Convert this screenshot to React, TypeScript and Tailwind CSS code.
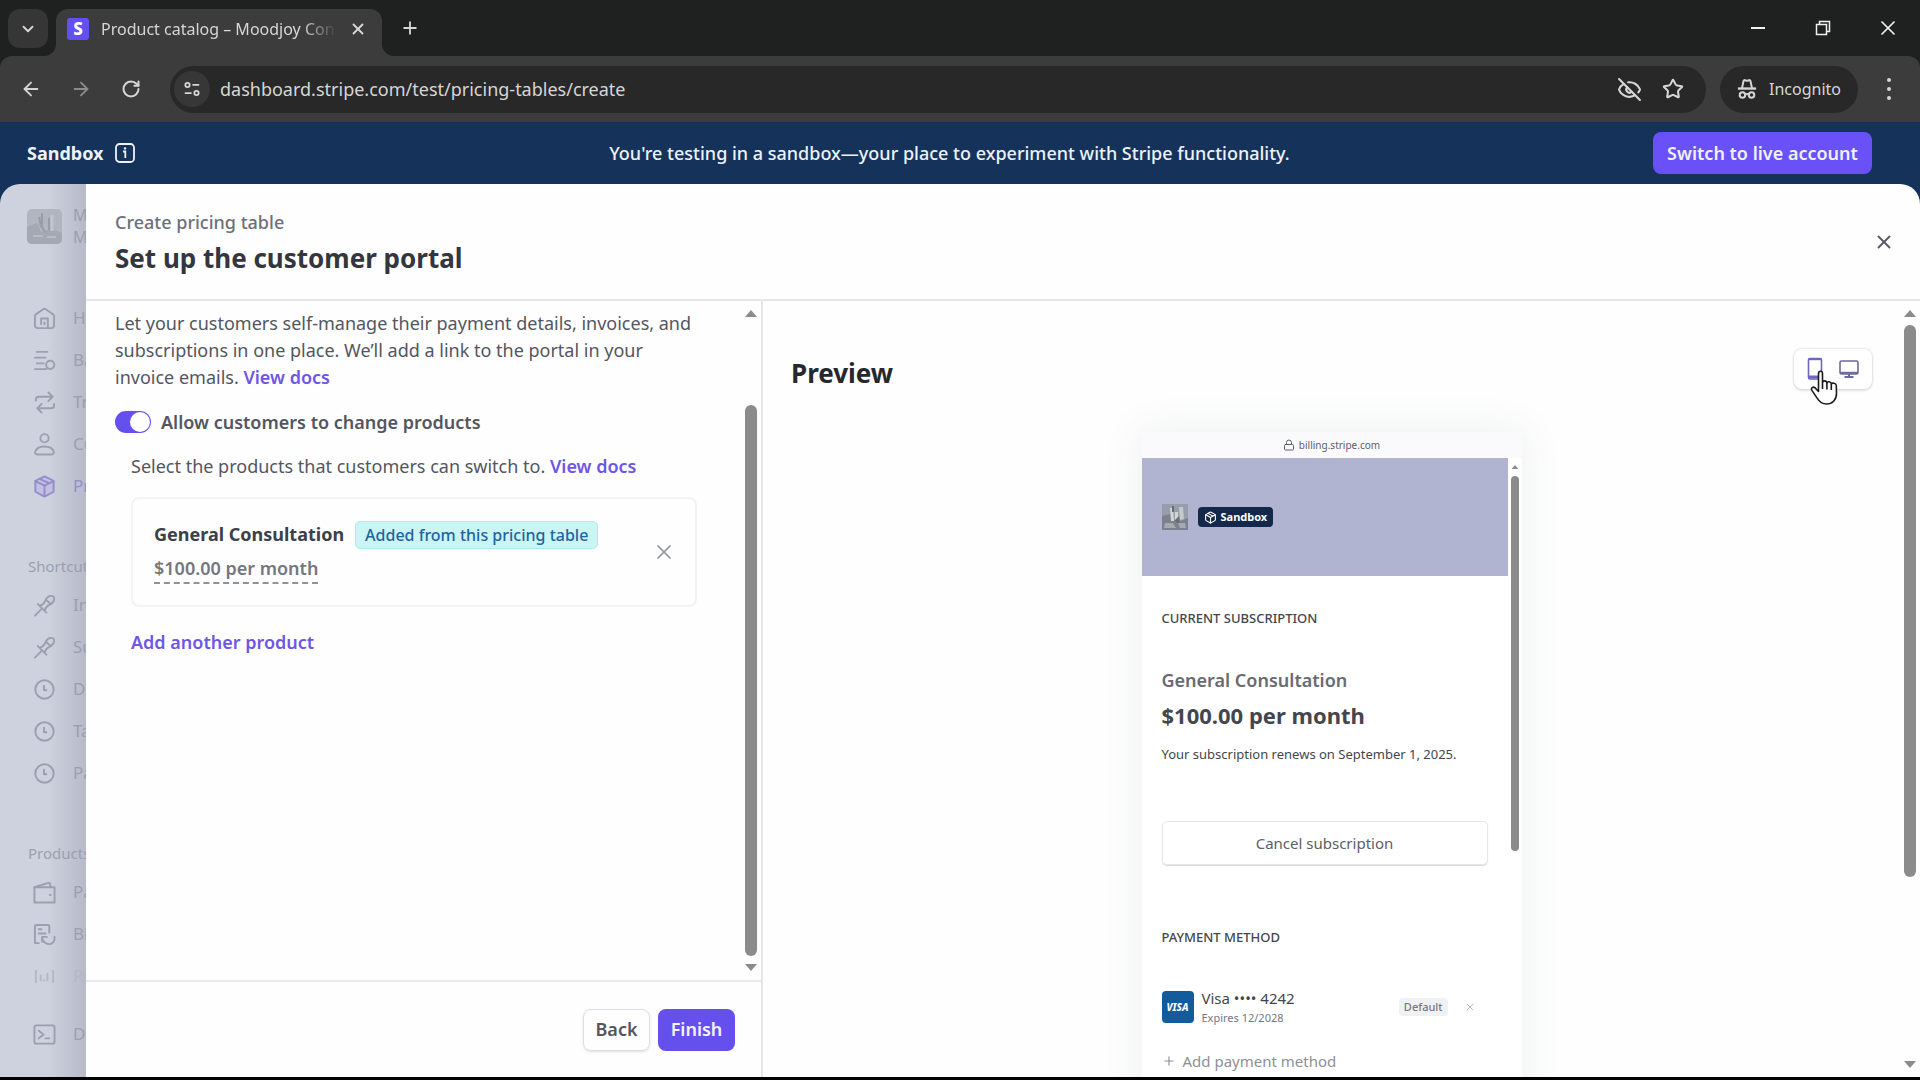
import React from "react";
import {
  ArrowLeft,
  ArrowRight,
  ChevronDown,
  EyeOff,
  Lock,
  Package,
  Plus,
  RotateCw,
  Star,
  X,
} from "lucide-react";

type IconProps = { className?: string };

function TuneIcon({ className }: IconProps) {
  return (
    <svg className={className} viewBox="0 0 20 20" fill="none" stroke="currentColor" strokeWidth="2">
      <circle cx="5" cy="5.5" r="2.4" />
      <path d="M10.5 5.5H18M2 14.5h7.5" />
      <circle cx="15" cy="14.5" r="2.4" />
    </svg>
  );
}

function IncognitoIcon({ className }: IconProps) {
  return (
    <svg className={className} viewBox="0 0 22 24" fill="none" stroke="currentColor" strokeWidth="2.2">
      <path d="M5.5 11 7.2 3.2c.2-.8.8-1.1 1.5-.9l1.2.4c.7.3 1.5.3 2.2 0l1.2-.4c.7-.2 1.3.1 1.5.9L16.5 11" />
      <path d="M1 11.5h20" strokeWidth="2.6" />
      <circle cx="6" cy="18.5" r="3" />
      <circle cx="16" cy="18.5" r="3" />
      <path d="M9 18c1.2-.7 2.8-.7 4 0" />
    </svg>
  );
}

function RestoreIcon({ className }: IconProps) {
  return (
    <svg className={className} viewBox="0 0 16 16" fill="none" stroke="currentColor" strokeWidth="1.5">
      <path d="M1.5 4.5h10v10h-10zM4.5 4.5v-3h10v10h-3" />
    </svg>
  );
}

function InfoIcon({ className }: IconProps) {
  return (
    <svg className={className} viewBox="0 0 20 20" fill="none" stroke="currentColor" strokeWidth="1.8">
      <rect x="1" y="1" width="18" height="18" rx="3.5" />
      <path d="M8 8.5h2.3V15" />
      <circle cx="10" cy="5.4" r="1.2" fill="currentColor" stroke="none" />
    </svg>
  );
}

function NavSvg({ className, children }: { className?: string; children: React.ReactNode }) {
  return (
    <svg
      className={className}
      viewBox="0 0 24 24"
      fill="none"
      stroke="currentColor"
      strokeWidth="2"
      strokeLinecap="round"
      strokeLinejoin="round"
    >
      {children}
    </svg>
  );
}

function HomeIcon({ className }: IconProps) {
  return (
    <NavSvg className={className}>
      <path d="M2 9.8c0-1 .5-1.900 1.300-2.400L10.700 2.300c.8-.5 1.800-.5 2.600 0l7.400 5.100c.8.5 1.300 1.400 1.300 2.400V19c0 1.700-1.300 3-3 3H5c-1.700 0-3-1.300-3-3z" />
      <path d="M8.500 18v-6h7v10M12 18v-2" />
    </NavSvg>
  );
}

function BalancesIcon({ className }: IconProps) {
  return (
    <NavSvg className={className}>
      <path d="M4 3h11M2 9h11M4 15h7M2 21h12" />
      <circle cx="18" cy="16.500" r="4.300" />
    </NavSvg>
  );
}

function TransactionsIcon({ className }: IconProps) {
  return (
    <NavSvg className={className}>
      <path d="M3 10V9c0-1.700 1.300-3 3-3h14M16 1.500 20.500 6 16 10.500" />
      <path d="M22 13.500v1.500c0 1.700-1.300 3-3 3H5M9 13.500 4.500 18 9 22.500" />
    </NavSvg>
  );
}

function CustomersIcon({ className }: IconProps) {
  return (
    <NavSvg className={className}>
      <circle cx="12" cy="5.500" r="4.300" />
      <path d="M5 22.500c-1.700 0-3-1.100-2.700-2.700C3 16.500 6.600 14 12 14s9 2.500 9.700 5.800c.3 1.600-1 2.700-2.700 2.700z" />
    </NavSvg>
  );
}

function ProductIcon({ className }: IconProps) {
  return (
    <NavSvg className={className}>
      <path d="M12 1.500 21.500 6v11.500L12 22.500 2.500 17.500V6z" fill="#c3c0e2" />
      <path d="M2.500 6.500 12 11l9.500-4.500M12 11v11M7 4l9.500 4.500" />
    </NavSvg>
  );
}

function PinIcon({ className }: IconProps) {
  return (
    <NavSvg className={className}>
      <path d="M2 22.500 9 15.500" />
      <path d="M5 10.500 14 19.500M6.500 12c3 0 5.500-3 7-6.500C15 2.800 18 1.500 20.500 2.200c.8.200 1.200.6 1.300 1.300.7 2.500-.8 5.500-3.300 7-3.500 1.700-6.500 4-6 7.500" />
      <path d="M13.500 6 18.500 10.500" />
    </NavSvg>
  );
}

function ClockIcon({ className }: IconProps) {
  return (
    <NavSvg className={className}>
      <circle cx="12" cy="12" r="9.600" />
      <path d="M11.500 8v4.800h2.500" />
    </NavSvg>
  );
}

function WalletIcon({ className }: IconProps) {
  return (
    <NavSvg className={className}>
      <path d="M1.500 6.500h21v16h-21z" />
      <path d="M1.500 6.500 16 2c1-.3 2 .2 2 1.200v3.300" />
      <path d="M17.500 14.500h1" />
    </NavSvg>
  );
}

function BillingIcon({ className }: IconProps) {
  return (
    <NavSvg className={className}>
      <path d="M6 21H2V3.500C2 2.500 2.700 2 3.500 2h12c.8 0 1.500.5 1.500 1.500V10" />
      <path d="M6 6.500h3M6 11h7M9.500 14.500v5M9.500 14.500h5" />
      <path d="M9.500 16c1 4 4 6 7.500 6 3.500 0 6-3 5.500-7.500" />
    </NavSvg>
  );
}

function ReportingIcon({ className }: IconProps) {
  return (
    <NavSvg className={className}>
      <path d="M3 6v12M21 6v12M8 11v5M15 9v7M11 16h1" />
    </NavSvg>
  );
}

function TerminalIcon({ className }: IconProps) {
  return (
    <NavSvg className={className}>
      <rect x="1.500" y="2.500" width="21" height="19" rx="2" />
      <path d="M6 8l5 4-5 4M13 16h4" />
    </NavSvg>
  );
}

function PhoneIcon({ className }: IconProps) {
  return (
    <svg className={className} viewBox="0 0 16 24" fill="none" stroke="currentColor" strokeWidth="1.6">
      <rect x="1.5" y="1.5" width="13" height="20.5" rx="1.5" />
      <path d="M1.5 20h13" strokeWidth="3" />
      <path d="M1.5 2.2h13" strokeWidth="2" />
    </svg>
  );
}

function MonitorIcon({ className }: IconProps) {
  return (
    <svg className={className} viewBox="0 0 20 20" fill="none" stroke="currentColor" strokeWidth="1.6">
      <rect x="1" y="2" width="18" height="13" rx="1.5" />
      <path d="M1 13.8h18" strokeWidth="2" />
      <path d="M5.5 18h9M10 15v3" strokeWidth="2" />
    </svg>
  );
}

function HandCursor({ className }: IconProps) {
  return (
    <svg className={className} viewBox="0 0 28 36" fill="#fff" stroke="#1c1c1c" strokeWidth="1.6" strokeLinejoin="round">
      <path d="M8.500 21.500V3.500c0-3 4-3 4 0v9c.5-2.400 4.200-2.200 4.400.5.700-2 4.200-1.700 4.400.9.900-1.300 4.700-1.100 5 1.600l.2 8c0 6-3.800 10.500-10 10.500-4.600 0-7-2-9.200-5.600l-5.400-8c-1.400-2.300 1.200-4.200 3.200-2.500z" />
      <path d="M12.500 12.500v6.500M16.900 13v6.500M21.300 14v6" fill="none" />
    </svg>
  );
}

function Thumbnail({ className }: IconProps) {
  return (
    <svg className={className} viewBox="0 0 26 26" preserveAspectRatio="none">
      <rect width="26" height="26" fill="#989dab" />
      <path d="M0 12 8 10l2 6 6 2 10-4v12H0z" fill="#7d818d" />
      <path d="M8 4h3l1 13H9zM13 8h3v10h-3z" fill="#d3d5d5" />
      <path d="M17 3h4l1 12-4 1z" fill="#c4cac9" />
      <path d="M10 2h2v6h-2zM12 17l5-5 1 8z" fill="#666b75" />
      <path d="M3 19h8l3 5H2zM16 19h7l1 5h-6z" fill="#a5aab2" />
    </svg>
  );
}

function FadedThumbnail({ className }: IconProps) {
  return (
    <svg className={className} viewBox="0 0 35 35">
      <rect width="35" height="35" rx="5" fill="#b0b5c0" />
      <path d="M0 18 10 14l4 9 10-3 11 4v6a5 5 0 0 1-5 5H5a5 5 0 0 1-5-5z" fill="#a3a8b3" />
      <path d="M15 4v14l3 5M22 9v12M12 8l2 10" stroke="#989da9" strokeWidth="2" fill="none" />
      <path d="M25 6v16" stroke="#c0c5ce" strokeWidth="3" />
      <path d="M6 27h10M20 28h9" stroke="#b7bcc6" strokeWidth="2" />
    </svg>
  );
}

function Arrow({ down = false, small = false }: { down?: boolean; small?: boolean }) {
  return (
    <svg className={small ? "w-2 h-1 text-[#8b8b8b]" : "w-3 h-[7px] text-[#8b8b8b]"} viewBox="0 0 12 7" fill="currentColor">
      <path d={down ? "M0 0h12L6 7z" : "M0 7h12L6 0z"} />
    </svg>
  );
}

function BrowserChrome() {
  return (
    <header className="shrink-0 bg-[#1f2020] text-[#d6d6d6]">
      <div className="flex h-14 items-end">
        <button aria-label="Search tabs" className="mb-2 ml-2 flex h-[39px] w-10 items-center justify-center rounded-xl bg-[#363636]">
          <ChevronDown className="size-[18px]" strokeWidth={2.5} />
        </button>
        <div className="relative ml-2 flex h-[47px] w-[326px] items-center rounded-t-xl bg-[#3c3c3c] pb-2 pl-[11px] pr-3 before:absolute before:bottom-0 before:-left-3 before:size-3 before:rounded-br-xl before:shadow-[4px_4px_0_4px_#3c3c3c] after:absolute after:bottom-0 after:-right-3 after:size-3 after:rounded-bl-xl after:shadow-[-4px_4px_0_4px_#3c3c3c]">
          <span className="flex size-[22px] shrink-0 items-center justify-center rounded-[3px] bg-[#6350f2] text-[17px] font-extrabold leading-none text-white">
            S
          </span>
          <span className="ml-3 w-[236px] overflow-hidden whitespace-nowrap text-base mask-r-from-85% mask-r-to-100%">
            Product catalog – Moodjoy Con
          </span>
          <button aria-label="Close tab" className="ml-auto flex size-6 items-center justify-center">
            <X className="size-[18px]" strokeWidth={2.5} />
          </button>
        </div>
        <button aria-label="New tab" className="mb-4 ml-4 flex size-6 items-center justify-center">
          <Plus className="size-5" strokeWidth={2.2} />
        </button>
        <div className="mb-4 ml-auto mr-5 flex gap-[41px] text-[#f0f0f0]">
          <button aria-label="Minimize" className="flex size-6 items-center justify-center">
            <span className="h-[2px] w-[14px] bg-current" />
          </button>
          <button aria-label="Restore" className="flex size-6 items-center justify-center">
            <RestoreIcon className="size-4" />
          </button>
          <button aria-label="Close window" className="flex size-6 items-center justify-center">
            <X className="size-6" strokeWidth={1.7} />
          </button>
        </div>
      </div>
      <div className="flex h-[66px] items-center rounded-t-xl bg-[#3c3c3c] pl-4">
        <button aria-label="Back" className="flex w-[30px] justify-center">
          <ArrowLeft className="size-[22px]" />
        </button>
        <button aria-label="Forward" className="ml-5 flex w-[30px] justify-center text-[#8b8b8b]">
          <ArrowRight className="size-[22px]" />
        </button>
        <button aria-label="Reload" className="ml-5 flex w-[30px] justify-center">
          <RotateCw className="size-5" strokeWidth={2.4} />
        </button>
        <div className="ml-6 flex h-[47px] flex-1 items-center rounded-full bg-[#282828] pl-1 pr-[22px]">
          <button aria-label="View site information" className="flex size-9 items-center justify-center rounded-full bg-[#373737]">
            <TuneIcon className="size-[18px]" />
          </button>
          <input
            aria-label="Address"
            className="ml-[10px] min-w-0 flex-1 bg-transparent text-[18px] leading-7 outline-none"
            defaultValue="dashboard.stripe.com/test/pricing-tables/create"
          />
          <button aria-label="Third-party cookies blocked" className="mr-5">
            <EyeOff className="size-[25px]" />
          </button>
          <button aria-label="Bookmark">
            <Star className="size-[22px]" strokeWidth={2.2} />
          </button>
        </div>
        <button className="ml-[14px] flex h-[47px] w-[138px] items-center justify-center gap-3 rounded-full bg-[#282828] text-base">
          <IncognitoIcon className="h-6 w-5" />
          Incognito
        </button>
        <button aria-label="Menu" className="ml-[18px] mr-[18px] flex w-[26px] flex-col items-center gap-[5px]">
          <span className="size-1 rounded-full bg-current" />
          <span className="size-1 rounded-full bg-current" />
          <span className="size-1 rounded-full bg-current" />
        </button>
      </div>
    </header>
  );
}

function SandboxBanner() {
  return (
    <div className="flex h-[62px] shrink-0 items-center bg-[#15335a] pl-[27px] pr-12 text-[18px] text-[#eef2f8]">
      <div className="flex flex-1 items-center gap-3 font-bold">
        Sandbox
        <InfoIcon className="size-5" />
      </div>
      <p className="font-medium">You're testing in a sandbox—your place to experiment with Stripe functionality.</p>
      <div className="flex flex-1 justify-end">
        <button className="h-[42px] w-[219px] rounded-lg bg-[#6a50f7] font-semibold">Switch to live account</button>
      </div>
    </div>
  );
}

function NavItem({ icon: Icon, label, active = false, faded = false }: {
  icon: React.ComponentType<IconProps>;
  label: string;
  active?: boolean;
  faded?: boolean;
}) {
  return (
    <a
      href="#"
      className={`flex h-[42px] shrink-0 items-center gap-[17px] whitespace-nowrap pl-[33px] ${active ? "text-[#938dcb]" : faded ? "text-[#b4b8c5]" : "text-[#9b9fae]"}`}
    >
      <Icon className="size-[23px] shrink-0" />
      <span className="min-w-0 flex-1 overflow-hidden">{label}</span>
    </a>
  );
}

function Sidebar() {
  return (
    <nav className="flex w-[86px] shrink-0 flex-col overflow-hidden rounded-tl-[20px] bg-linear-to-r from-[#ced2de] from-55% to-[#b7bac8] text-[17px] text-[#9b9fae]">
      <div className="mt-[22px] flex h-10 shrink-0 items-center gap-[11px] whitespace-nowrap pl-[27px]">
        <FadedThumbnail className="size-[35px] shrink-0" />
        <div className="min-w-0 flex-1 overflow-hidden text-base leading-[22px]">
          <div>Moodjoy</div>
          <div>Moodjoy</div>
        </div>
      </div>
      <div className="mt-[51px] flex shrink-0 flex-col">
        <NavItem icon={HomeIcon} label="Home" />
        <NavItem icon={BalancesIcon} label="Balances" />
        <NavItem icon={TransactionsIcon} label="Transactions" />
        <NavItem icon={CustomersIcon} label="Customers" />
        <NavItem icon={ProductIcon} label="Product catalog" active />
      </div>
      <h3 className="mt-[47px] overflow-hidden pl-7 text-[15px] leading-6">Shortcuts</h3>
      <div className="mt-[6px] flex shrink-0 flex-col">
        <NavItem icon={PinIcon} label="Invoices" />
        <NavItem icon={PinIcon} label="Subscriptions" />
        <NavItem icon={ClockIcon} label="Disputes" />
        <NavItem icon={ClockIcon} label="Tax" />
        <NavItem icon={ClockIcon} label="Payment Links" />
      </div>
      <h3 className="mt-[47px] overflow-hidden pl-7 text-[15px] leading-6">Products</h3>
      <div className="mt-[6px] flex shrink-0 flex-col">
        <NavItem icon={WalletIcon} label="Payments" />
        <NavItem icon={BillingIcon} label="Billing" />
        <NavItem icon={ReportingIcon} label="Reporting" faded />
      </div>
      <div className="mb-[22px] mt-auto">
        <NavItem icon={TerminalIcon} label="Developers" />
      </div>
    </nav>
  );
}

function SettingsPanel() {
  return (
    <section className="flex w-[677px] shrink-0 flex-col border-r-2 border-[#e4e6ea] text-[18px] text-[#53565e]">
      <div className="flex min-h-0 flex-1">
        <div className="min-w-0 flex-1 overflow-hidden pl-[29px] pr-11 pt-[9px]">
          <p className="leading-[27px]">
            Let your customers self-manage their payment details, invoices, and subscriptions in one place. We’ll add a
            link to the portal in your invoice emails.{" "}
            <a href="#" className="font-semibold text-[#6f56e6]">View docs</a>
          </p>
          <label className="mt-[17px] flex h-7 items-center gap-[10px] font-semibold">
            <input
              type="checkbox"
              defaultChecked
              className="relative h-[22px] w-9 appearance-none rounded-full bg-[#6550ee] before:absolute before:right-px before:top-px before:size-5 before:rounded-full before:bg-white"
            />
            Allow customers to change products
          </label>
          <div className="ml-4 mt-[17px]">
            <p className="leading-[27px]">
              Select the products that customers can switch to.{" "}
              <a href="#" className="font-semibold text-[#6f56e6]">View docs</a>
            </p>
            <div className="mt-[17px] flex h-[110px] items-center rounded-lg border-2 border-[#f2f3f5] pl-[21px] pr-[19px]">
              <div className="flex-1">
                <div className="flex items-center gap-[11px]">
                  <h3 className="font-bold text-[#3d4048]">General Consultation</h3>
                  <span className="flex h-7 items-center whitespace-nowrap rounded-[5px] border border-[#a9ebee] bg-[#cbf5f5] px-[9px] text-base font-medium text-[#1f63a0]">
                    Added from this pricing table
                  </span>
                </div>
                <span className="mt-[6px] inline-block border-b-2 border-dashed border-[#8c919b] font-semibold leading-[27px] text-[#73777f]">
                  $100.00 per month
                </span>
              </div>
              <button aria-label="Remove product" className="text-[#8f939b]">
                <X className="size-6" strokeWidth={1.7} />
              </button>
            </div>
            <button className="mt-[22px] font-semibold leading-[27px] text-[#6f56e6]">Add another product</button>
          </div>
        </div>
        <div className="flex w-5 flex-col items-center py-[9px]">
          <Arrow />
          <div className="mt-[88px] w-3 flex-1 rounded-full bg-[#8b8b8b]" />
          <div className="mt-2">
            <Arrow down />
          </div>
        </div>
      </div>
      <footer className="flex h-[97px] shrink-0 items-center justify-end gap-2 border-t-2 border-[#e8eaed] pr-[26px] font-semibold">
        <button className="h-[42px] w-[67px] rounded-lg border border-[#dcdfe4] shadow-sm">Back</button>
        <button className="h-[42px] w-[77px] rounded-lg bg-[#6550ee] text-[#f4f2ff]">Finish</button>
      </footer>
    </section>
  );
}

function PortalPreview() {
  return (
    <div className="mx-auto mt-[43px] flex w-[380px] flex-col bg-white text-[#43464d] shadow-[0_0_36px_4px_rgba(60,66,87,0.07)]">
      <div className="flex h-[26px] items-center justify-center gap-1 bg-[#fafafc] text-[10px] text-[#5d616b]">
        <Lock className="size-3" />
        billing.stripe.com
      </div>
      <div className="flex">
        <div className="flex-1">
          <div className="flex h-[118px] items-center gap-[10px] bg-[#b1b4d1] pl-5">
            <Thumbnail className="size-[26px]" />
            <span className="flex h-5 items-center gap-1 rounded-[4px] bg-[#14284c] px-[6px] text-[11px] font-bold text-white">
              <Package className="size-[13px]" />
              Sandbox
            </span>
          </div>
          <div className="px-5">
            <h4 className="mt-8 text-[13px] font-medium leading-5">CURRENT SUBSCRIPTION</h4>
            <p className="mt-[38px] text-[18px] font-semibold leading-7 text-[#686b72]">General Consultation</p>
            <p className="mt-[5px] text-[22px] font-bold leading-8">$100.00 per month</p>
            <p className="mt-[13px] whitespace-nowrap text-[13px] leading-5">Your subscription renews on September 1, 2025.</p>
            <button className="mt-[57px] block h-[44px] w-full rounded-[5px] border border-[#e6e7eb] text-[15px] text-[#5c5f67] shadow-[0_1px_1px_rgba(0,0,0,0.16)]">
              Cancel subscription
            </button>
            <h4 className="mt-[62px] text-[13px] font-medium leading-5">PAYMENT METHOD</h4>
            <div className="mt-[40px] flex h-10 items-center">
              <span className="flex size-8 items-center justify-center rounded-[4px] bg-[#125b9c] text-[10px] font-extrabold italic text-white">
                VISA
              </span>
              <div className="ml-2">
                <div className="text-[15px] leading-[21px]">Visa •••• 4242</div>
                <div className="text-[11px] leading-[18px] text-[#74777e]">Expires 12/2028</div>
              </div>
              <span className="ml-auto rounded bg-[#f0f1f3] px-[5px] text-[11px] font-medium leading-[18px] text-[#74777e]">Default</span>
              <button aria-label="Remove card" className="ml-4 mr-3 text-[#b9bbc1]">
                <X className="size-3" />
              </button>
            </div>
            <button className="mt-[22px] flex items-center gap-[7px] text-[15px] leading-6 text-[#8d9096]">
              <Plus className="size-[14px]" />
              Add payment method
            </button>
            <div className="h-40" />
          </div>
        </div>
        <div className="flex w-[14px] flex-col items-center pt-[7px]">
          <Arrow small />
          <div className="mt-[7px] h-[375px] w-2 rounded-full bg-[#8b8b8b]" />
        </div>
      </div>
    </div>
  );
}

function PreviewPanel() {
  return (
    <section className="flex min-w-0 flex-1">
      <div className="relative min-w-0 flex-1 overflow-hidden px-7 pt-[46px]">
        <div className="flex h-[42px] items-end justify-between">
          <h2 className="text-[26px] font-bold leading-8 text-[#26282e]">Preview</h2>
          <div className="relative flex h-10 w-[78px] items-center justify-center gap-4 rounded-lg bg-white text-[#6f66c4] shadow-[0_0_3px_rgba(0,0,0,0.18),0_2px_3px_rgba(0,0,0,0.08)]">
            <button aria-label="Mobile preview">
              <PhoneIcon className="h-6 w-4" />
            </button>
            <button aria-label="Desktop preview" className="text-[#6c6a9c]">
              <MonitorIcon className="size-5" />
            </button>
            <HandCursor className="pointer-events-none absolute left-4 top-[21px] h-9 w-7" />
          </div>
        </div>
        <PortalPreview />
      </div>
      <div className="flex w-5 flex-col items-center pb-[9px] pt-[9px]">
        <Arrow />
        <div className="mt-2 w-3 grow-[3] rounded-full bg-[#8b8b8b]" />
        <div className="grow" />
        <Arrow down />
      </div>
    </section>
  );
}

export default function App() {
  return (
    <div className="flex h-screen flex-col overflow-hidden bg-[#15335a] font-['Noto_Sans',sans-serif]">
      <BrowserChrome />
      <SandboxBanner />
      <div className="flex min-h-0 flex-1">
        <Sidebar />
        <main className="flex min-w-0 flex-1 flex-col overflow-hidden rounded-tr-[20px] bg-[#fefefe]">
          <header className="flex h-[117px] shrink-0 items-center justify-between border-b-2 border-[#e4e6ea] pl-[29px] pr-6">
            <div>
              <p className="text-[18px] font-medium leading-7 text-[#6d7079]">Create pricing table</p>
              <h1 className="mt-1 text-[26px] font-bold leading-9 text-[#34363d]">Set up the customer portal</h1>
            </div>
            <button aria-label="Close" className="flex size-6 items-center justify-center text-[#5c5f67]">
              <X className="size-[22px]" strokeWidth={2.2} />
            </button>
          </header>
          <div className="flex min-h-0 flex-1">
            <SettingsPanel />
            <PreviewPanel />
          </div>
        </main>
      </div>
      <div className="h-[3px] shrink-0 bg-black" />
    </div>
  );
}
